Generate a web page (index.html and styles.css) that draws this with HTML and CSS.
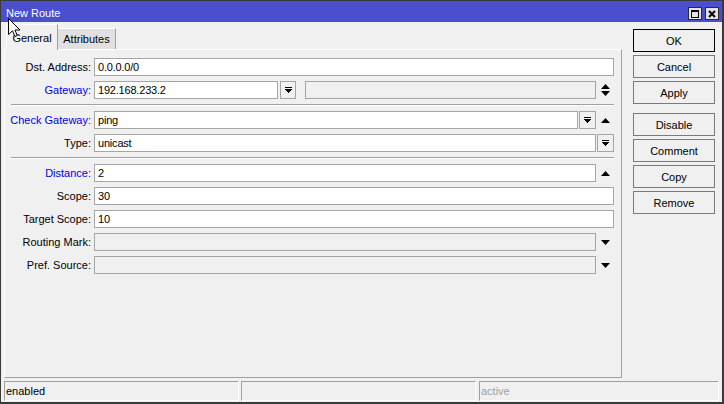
FILE: index.html
```html
<!DOCTYPE html>
<html>
<head>
<meta charset="utf-8">
<title>New Route</title>
<link rel="stylesheet" href="styles.css">
</head>
<body>
<div class="window">
  <div class="titlebar">
    <span class="title">New Route</span>
    <div class="winbtns">
      <span class="winbtn"><svg width="8" height="8" viewBox="0 0 8 8"><rect x="0.5" y="1" width="7" height="6.5" fill="none" stroke="#000"/><rect x="0" y="0" width="8" height="2" fill="#000"/></svg></span>
      <span class="winbtn"><svg width="8" height="8" viewBox="0 0 8 8"><path d="M1 1 L7 7 M7 1 L1 7" stroke="#000" stroke-width="2"/></svg></span>
    </div>
  </div>
  <div class="content">
    <div class="main">
      <div class="tabs">
        <div class="tab active">General</div>
        <div class="tab">Attributes</div>
      </div>
      <div class="panel">
        <div class="row">
          <label class="lbl">Dst. Address:</label>
          <div class="field">0.0.0.0/0</div>
        </div>
        <div class="row">
          <label class="lbl blue">Gateway:</label>
          <div class="field gw">192.168.233.2</div>
          <span class="dd gwdd"><svg width="7" height="6" viewBox="0 0 7 6"><rect x="0" y="0" width="7" height="1"/><rect x="0" y="2" width="7" height="1"/><rect x="1" y="3" width="5" height="1"/><rect x="2" y="4" width="3" height="1"/><rect x="3" y="5" width="1" height="1"/></svg></span>
          <div class="field off gwextra"></div>
          <span class="ic"><svg width="9" height="12" viewBox="0 0 9 12"><path d="M4.5 0 L9 5 L0 5 Z M0 7 L9 7 L4.5 12 Z"/></svg></span>
        </div>
        <div class="sep"></div>
        <div class="row">
          <label class="lbl blue">Check Gateway:</label>
          <div class="field">ping</div>
          <span class="dd"><svg width="7" height="6" viewBox="0 0 7 6"><rect x="0" y="0" width="7" height="1"/><rect x="0" y="2" width="7" height="1"/><rect x="1" y="3" width="5" height="1"/><rect x="2" y="4" width="3" height="1"/><rect x="3" y="5" width="1" height="1"/></svg></span>
          <span class="ic"><svg width="9" height="5" viewBox="0 0 9 5"><path d="M4.5 0 L9 5 L0 5 Z"/></svg></span>
        </div>
        <div class="row">
          <label class="lbl">Type:</label>
          <div class="field">unicast</div>
          <span class="dd"><svg width="7" height="6" viewBox="0 0 7 6"><rect x="0" y="0" width="7" height="1"/><rect x="0" y="2" width="7" height="1"/><rect x="1" y="3" width="5" height="1"/><rect x="2" y="4" width="3" height="1"/><rect x="3" y="5" width="1" height="1"/></svg></span>
        </div>
        <div class="sep"></div>
        <div class="row">
          <label class="lbl blue">Distance:</label>
          <div class="field">2</div>
          <span class="ic"><svg width="9" height="5" viewBox="0 0 9 5"><path d="M4.5 0 L9 5 L0 5 Z"/></svg></span>
        </div>
        <div class="row">
          <label class="lbl">Scope:</label>
          <div class="field">30</div>
        </div>
        <div class="row">
          <label class="lbl">Target Scope:</label>
          <div class="field">10</div>
        </div>
        <div class="row">
          <label class="lbl">Routing Mark:</label>
          <div class="field off"></div>
          <span class="ic"><svg width="9" height="5" viewBox="0 0 9 5"><path d="M0 0 L9 0 L4.5 5 Z"/></svg></span>
        </div>
        <div class="row">
          <label class="lbl">Pref. Source:</label>
          <div class="field off"></div>
          <span class="ic"><svg width="9" height="5" viewBox="0 0 9 5"><path d="M0 0 L9 0 L4.5 5 Z"/></svg></span>
        </div>
      </div>
    </div>
    <div class="side">
      <button class="btn default">OK</button>
      <button class="btn">Cancel</button>
      <button class="btn">Apply</button>
      <button class="btn spaced">Disable</button>
      <button class="btn">Comment</button>
      <button class="btn">Copy</button>
      <button class="btn">Remove</button>
    </div>
  </div>
  <div class="status">
    <div class="cell c1">enabled</div>
    <div class="cell c2"></div>
    <div class="cell c3 dim">active</div>
  </div>
  <svg class="cursor" width="13" height="20" viewBox="0 0 13 20"><path d="M0.5 0.5 L0.5 16.5 L4.5 12.8 L7 18.5 L9.3 17.5 L6.9 12 L12 12 Z" fill="#fff" stroke="#000" stroke-width="1" stroke-linejoin="miter"/></svg>
</div>
</body>
</html>
```

FILE: styles.css
```css
* { box-sizing: border-box; }
html, body { margin: 0; padding: 0; }
body {
  font-family: "Liberation Sans", Arial, sans-serif;
  font-size: 11px;
  color: #000;
  background: #f0f0f0;
}
.window {
  position: relative;
  width: 724px;
  height: 404px;
  border-style: solid;
  border-color: #3a3a3a;
  border-width: 1px 2px 2px 1px;
  background: #f0f0f0;
  display: flex;
  flex-direction: column;
  overflow: hidden;
}
.titlebar {
  height: 21px;
  flex: none;
  background: #4a4ecf;
  color: #fff;
  display: flex;
  align-items: center;
  padding: 4px 3px 0 5px;
}
.title { flex: 1; line-height: 13px; }
.winbtns { display: flex; gap: 3px; }
.winbtn {
  width: 14px;
  height: 13px;
  border: 1px solid #2a2a2a;
  background: #e4e4e4;
  display: flex;
  align-items: center;
  justify-content: center;
}
.winbtn svg { display: block; }

.content {
  flex: 1;
  display: flex;
  padding: 2px 0 0 3px;
  min-height: 0;
}
.main {
  width: 618px;
  display: flex;
  flex-direction: column;
}
.tabs {
  height: 25px;
  flex: none;
  display: flex;
  align-items: flex-end;
  padding-left: 2px;
  position: relative;
  z-index: 1;
}
.tab {
  height: 21px;
  padding: 0 6px;
  display: flex;
  align-items: center;
  justify-content: center;
  background: #e0e0e0;
  border-top: 1px solid #fff;
  border-left: 1px solid #fff;
  border-right: 1px solid #a0a0a0;
}
.tab.active {
  height: 26px;
  width: 52px;
  margin-bottom: -1px;
  background: #f0f0f0;
}
.tab:not(.active) { width: 58px; border-left: none; }

.panel {
  flex: 1;
  border: 1px solid;
  border-color: #fff #a0a0a0 #a0a0a0 #fff;
  padding: 8px 7px 0 0;
}
.row {
  display: flex;
  align-items: center;
  height: 18px;
  margin-bottom: 5px;
}
.lbl {
  width: 86px;
  margin-right: 3px;
  text-align: right;
  white-space: nowrap;
}
.blue { color: #0000f0; }
.field {
  flex: 1;
  height: 18px;
  border: 1px solid #a5a5a5;
  background: #fff;
  padding-left: 3px;
  line-height: 16px;
  letter-spacing: -0.2px;
  white-space: nowrap;
  overflow: hidden;
}
.field.off { background: #f0f0f0; }
.field.gw { flex: none; width: 184px; }
.gwextra { margin-left: 9px; }
.dd {
  width: 17px;
  height: 18px;
  margin-left: 1px;
  border: 1px solid #a5a5a5;
  background: #f0f0f0;
  display: flex;
  align-items: center;
  justify-content: center;
  flex: none;
}
.dd.gwdd { width: 16px; margin-left: 2px; }
.dd svg { display: block; fill: #000; }
.ic {
  width: 17px;
  margin-left: 1px;
  display: flex;
  justify-content: center;
  flex: none;
}
.ic svg { display: block; fill: #000; }
.sep {
  margin: 1px 0 5px 6px;
  border-top: 1px solid #a0a0a0;
  border-bottom: 1px solid #fff;
}

.side {
  width: 82px;
  margin-left: 11px;
  padding-top: 5px;
  display: flex;
  flex-direction: column;
  gap: 3px;
}
.btn {
  height: 23px;
  border: 1px solid #7a7a7a;
  background: #f0f0f0;
  font-family: "Liberation Sans", Arial, sans-serif;
  font-size: 11px;
  color: #000;
  padding: 0;
  margin: 0;
}
.btn.default { border-color: #000; }
.btn.spaced { margin-top: 6px; }

.status {
  height: 20px;
  flex: none;
  margin: 3px 0 1px;
  padding-left: 3px;
  display: flex;
}
.cell {
  height: 20px;
  border: 1px solid;
  border-color: #a0a0a0 #fff #fff #a0a0a0;
  padding-left: 1px;
  line-height: 18px;
  white-space: nowrap;
}
.c1 { width: 235px; }
.c2 { width: 235px; margin-left: 2px; }
.c3 { width: 240px; margin-left: 3px; }
.dim { color: #a0a0a0; }

.cursor {
  position: absolute;
  left: 7px;
  top: 17px;
  z-index: 5;
}
```
